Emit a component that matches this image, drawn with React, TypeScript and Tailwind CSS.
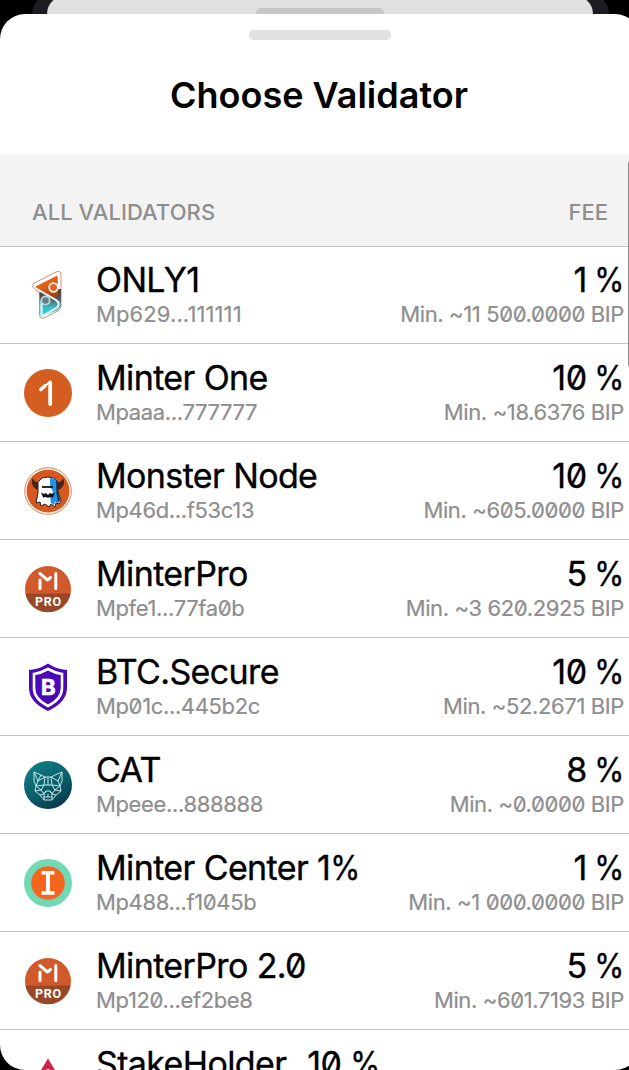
import type { ReactNode } from "react";
import clsx from "clsx";

function OnlyOneLogo() {
  return (
    <svg viewBox="0 0 48 48" className="w-12 h-12">
      <defs>
        <linearGradient id="onlyTop" x1="0" y1="0" x2="0.6" y2="1">
          <stop offset="0.5" stopColor="#df6019" />
          <stop offset="1" stopColor="#9a451c" />
        </linearGradient>
        <linearGradient id="onlyBottom" x1="0" y1="0" x2="0" y2="1">
          <stop offset="0" stopColor="#4b3f40" />
          <stop offset="0.3" stopColor="#5b4c4c" />
          <stop offset="0.7" stopColor="#35c2d0" />
          <stop offset="1" stopColor="#2edbea" />
        </linearGradient>
      </defs>
      <path d="M9.500 12.500 L32 1 Q37 -1 37 4 V35 Q37 38 34 40 L21 46.500 Q15.500 49 15.500 43 V22 L9.500 17 Q7 14.500 9.500 12.500Z" fill="#fff" stroke="#b9603a" strokeWidth="0.700" />
      <path d="M15.500 19 L37 18 V35 L34 39 L20 45 Q16 46.500 16 42Z" fill="url(#onlyBottom)" />
      <path d="M12 14.500 L32 4 Q34.500 3 34.500 6 V24 L30 27 L12 17Z" fill="url(#onlyTop)" />
      <path d="M34.500 6 Q34.500 3 32 4 L12 14 Q9.500 15.500 12 17.500 L32 29 Q37 33 33 36.500 L20.500 44 Q17.500 45 17.500 42 V30" fill="none" stroke="#fff" strokeWidth="2" />
      <circle cx="29.500" cy="16.500" r="4.300" fill="#d66326" stroke="#fff1e7" strokeWidth="1.800" />
      <path d="M34.500 4 V18" stroke="#fff" strokeWidth="1.600" />
      <circle cx="21.500" cy="29.500" r="4.200" fill="#5d7f83" stroke="#b7d9dc" strokeWidth="1.800" />
    </svg>
  );
}

function MinterOneLogo() {
  return (
    <svg viewBox="0 0 48 48" className="w-12 h-12">
      <circle cx="24" cy="24" r="24" fill="#d45d20" />
      <path d="M16.800 20.500 L20.800 17" fill="none" stroke="#fff" strokeWidth="3.600" strokeLinecap="round" />
      <path d="M26.200 13.500 V35" fill="none" stroke="#fff" strokeWidth="3.800" strokeLinecap="round" />
      <path d="M21 17 L26 12.700" stroke="#fff" strokeWidth="1.800" strokeLinecap="round" />
    </svg>
  );
}

function MonsterLogo() {
  return (
    <svg viewBox="0 0 48 48" className="w-12 h-12">
      <circle cx="24" cy="24" r="23.300" fill="#fff" stroke="#dc8354" strokeWidth="1" />
      <circle cx="24" cy="24" r="21.500" fill="#d6581e" />
      <path d="M8.500 11 Q6 21 15 23 L17 15 Q12 17 8.500 11Z M39.500 11 Q42 21 33 23 L31 15 Q36 17 39.500 11Z" fill="#4b211a" />
      <path d="M14 15 L18 11 L24 10 L30 11 L34 15 L34 25 L37 33 L35 37 L32 36 L31 40 L27 37 L25 40 L21 37 L17 39 L16 35 L12 36 L14 26Z" fill="#fff" stroke="#222" strokeWidth="1" />
      <path d="M26 11 L31 12 L34 16 L34 26 L36 33 L34 36 L31 35 L30 38 L27 36 L26 30 L29 25 L26 19Z" fill="#2492e8" />
      <path d="M32 13 L34 16 V25 L36 33 L34 35 L32.500 27Z" fill="#17324d" />
      <path d="M18 20 H29" fill="none" stroke="#111" strokeWidth="1.800" />
      <path d="M17 25.500 L20 27 L22 26 L24 28 L26 26 L28 27 L31 25.500 L29 30.500 L26 30 L24 31 L22 30 L19 30.500Z" fill="#111" />
    </svg>
  );
}

function MinterProLogo() {
  return (
    <svg viewBox="0 0 48 48" className="w-12 h-12">
      <circle cx="24" cy="24" r="23" fill="#d1592b" />
      <path d="M1.400 28.500 H46.600 A23 23 0 0 1 1.400 28.500Z" fill="#984829" />
      <path d="M16 15 V23.500" fill="none" stroke="#fff" strokeWidth="3" strokeLinecap="round" />
      <path d="M15.800 8.500 L23.500 15 L26.500 12.500 M31.800 8.500 V23.500" fill="none" stroke="#fff" strokeWidth="3" strokeLinecap="round" strokeLinejoin="round" />
      <text x="24.400" y="40.500" textAnchor="middle" fill="#fff" fontSize="12.500" fontWeight="700" letterSpacing="0.700" fontFamily="Roboto, sans-serif">
        PRO
      </text>
    </svg>
  );
}

function SecureLogo() {
  return (
    <svg viewBox="0 0 48 48" className="w-12 h-12">
      <path d="M24 0.500 Q32 6 43 7 V25 Q43 39 24 48 Q5 39 5 25 V7 Q16 6 24 0.500Z" fill="#4b08b8" />
      <path d="M24 6 Q31 10 38 11 V25 Q38 36 24 43 Q10 36 10 25 V11 Q17 10 24 6Z" fill="#4b08b8" stroke="#fff" strokeWidth="2.600" />
      <text x="24.200" y="31.500" textAnchor="middle" fill="#fff" stroke="#fff" strokeWidth="0.700" fontSize="22" fontWeight="700" fontFamily="Inter, sans-serif">
        B
      </text>
    </svg>
  );
}

function CatLogo() {
  return (
    <svg viewBox="0 0 48 48" className="w-12 h-12">
      <defs>
        <linearGradient id="catBg" x1="0.200" y1="0" x2="0.800" y2="1">
          <stop offset="0" stopColor="#137f86" />
          <stop offset="0.550" stopColor="#095d69" />
          <stop offset="1" stopColor="#063548" />
        </linearGradient>
      </defs>
      <circle cx="24" cy="24" r="24" fill="url(#catBg)" />
      <g fill="none" stroke="#c2e7e7" strokeWidth="1" strokeLinejoin="round">
        <path d="M10 11 L17 14 L21 16 H27 L31 14 L38 11 L38 20 L36 25 L37 30 L32 34 L28 39 H20 L16 34 L11 30 L12 25 L10 20Z" />
        <path d="M10 11 L14 20 L21 16 L20 24 M28 24 L27 16 L34 20 L38 11 M17 14 L14 20 L12 25 L20 24 H28 L36 25 L34 20 M12 25 L17 29 L20 24 M36 25 L31 29 L28 24 M11 30 L17 29 L20 33 L22 30 M26 30 L28 33 L31 29 L37 30" />
        <path d="M16 34 L20 33 L22 30 H26 L28 33 L32 34 M24 33 V36 M20 33 V39 M28 33 V39 M20 36 H28 M24 16 V24" />
      </g>
    </svg>
  );
}

function CenterLogo() {
  return (
    <svg viewBox="0 0 48 48" className="w-12 h-12">
      <circle cx="24" cy="24" r="24" fill="#72d9b5" />
      <circle cx="24" cy="24" r="16.800" fill="#f6651d" />
      <path d="M17.500 13.800 H30.500 M17.500 34 H30.500" stroke="#fff" strokeWidth="3.400" />
      <path d="M24 15 V33" stroke="#fff" strokeWidth="4" />
    </svg>
  );
}

function StakeHolderLogo() {
  return (
    <svg viewBox="0 0 48 48" className="w-12 h-12">
      <path d="M24 3.500 L46 40 H2Z" fill="#cf2348" />
      <circle cx="24" cy="15.500" r="1.600" fill="#fff" />
    </svg>
  );
}

type Validator = {
  name: ReactNode;
  address: string;
  fee: string;
  min: string;
  logo: ReactNode;
  wideAddress?: boolean;
};

const validators: Validator[] = [
  { name: "ONLY1", address: "Mp629...111111", fee: "1", min: "Min. ~11 500.0000 BIP", logo: <OnlyOneLogo />, wideAddress: true },
  { name: "Minter One", address: "Mpaaa...777777", fee: "10", min: "Min. ~18.6376 BIP", logo: <MinterOneLogo /> },
  { name: "Monster Node", address: "Mp46d...f53c13", fee: "10", min: "Min. ~605.0000 BIP", logo: <MonsterLogo /> },
  { name: "MinterPro", address: "Mpfe1...77fa0b", fee: "5", min: "Min. ~3 620.2925 BIP", logo: <MinterProLogo /> },
  { name: "BTC.Secure", address: "Mp01c...445b2c", fee: "10", min: "Min. ~52.2671 BIP", logo: <SecureLogo /> },
  { name: "CAT", address: "Mpeee...888888", fee: "8", min: "Min. ~0.0000 BIP", logo: <CatLogo /> },
  { name: <>Minter Center 1<Percent /></>, address: "Mp488...f1045b", fee: "1", min: "Min. ~1 000.0000 BIP", logo: <CenterLogo /> },
  { name: "MinterPro 2.0", address: "Mp120...ef2be8", fee: "5", min: "Min. ~601.7193 BIP", logo: <MinterProLogo /> },
  {
    name: <>StakeHolder<span className="mx-[3px]">_</span>10 <Percent /></>,
    address: "",
    fee: "",
    min: "",
    logo: <StakeHolderLogo />,
  },
];

function Percent() {
  return <span className="inline-block origin-right scale-x-[0.9] -ml-[3px]">%</span>;
}

function ValidatorRow({ validator }: { validator: Validator }) {
  return (
    <li className="flex h-[98px] shrink-0 items-end border-b border-[#c2c2c2] pl-6 pr-4 first:h-[97px]">
      <div className="h-[72px] w-12 mr-6 shrink-0">{validator.logo}</div>
      <div className="h-[83px] flex-1 whitespace-nowrap">
        <p className="text-[34px] leading-[40px] tracking-[-0.62px] text-black [-webkit-text-stroke:0.35px_black]">
          {validator.name}
        </p>
        <p
          className={clsx(
            "text-[22px] leading-[28px] text-[#8e8e8e] [-webkit-text-stroke:0.2px_#8e8e8e]",
            validator.wideAddress ? "tracking-[0.1px]" : "tracking-[-0.36px]"
          )}
        >
          {validator.address}
        </p>
      </div>
      <div className="h-[83px] text-right whitespace-nowrap">
        <p className="text-[34px] leading-[40px] tracking-[-0.4px] [word-spacing:-2px] text-black [-webkit-text-stroke:0.35px_black]">
          {validator.fee && (
            <>
              {validator.fee} <Percent />
            </>
          )}
        </p>
        <p className="text-[22px] leading-[28px] tracking-[-0.38px] text-[#8e8e8e] [-webkit-text-stroke:0.2px_#8e8e8e]">
          {validator.min}
        </p>
      </div>
    </li>
  );
}

export default function App() {
  return (
    <div className="relative h-[1070px] w-[629px] overflow-hidden bg-black font-['Inter',sans-serif] slashed-zero">
      <div className="absolute left-8 -top-[6px] h-[60px] w-[577px] rounded-t-[20px] bg-[#1c1c22]" />
      <div className="absolute left-[47px] -top-1 h-[60px] w-[546px] rounded-t-[18px] bg-[#e0e0e0]" />
      <div className="absolute left-[256px] top-2 h-[10px] w-32 rounded-full bg-[#c6c6c6]" />

      <main className="relative mt-[14px] flex h-[1056px] w-[640px] flex-col overflow-hidden rounded-[25px] bg-white">
        <header className="flex h-[140px] shrink-0 flex-col items-center pt-4">
          <div className="h-[10px] w-[142px] rounded-full bg-[#e0e0e0]" />
          <h1 className="mt-[33px] mr-[2px] text-[36px] leading-[44px] font-semibold text-black">Choose Validator</h1>
        </header>
        <div className="flex h-[93px] shrink-0 items-end justify-between border-b border-[#c2c2c2] bg-[#f3f3f3] px-8 pb-5 text-[22px] leading-[28px] font-medium text-[#8e8e8e]">
          <span className="tracking-[0.07px]">ALL VALIDATORS</span>
          <span>FEE</span>
        </div>
        <ul className="flex flex-col">
          {validators.map((validator, i) => (
            <ValidatorRow key={i} validator={validator} />
          ))}
        </ul>
      </main>
      <div className="absolute left-[628px] top-[161px] h-[206px] w-[6px] rounded-full bg-[#8a8a8a]" />
    </div>
  );
}
